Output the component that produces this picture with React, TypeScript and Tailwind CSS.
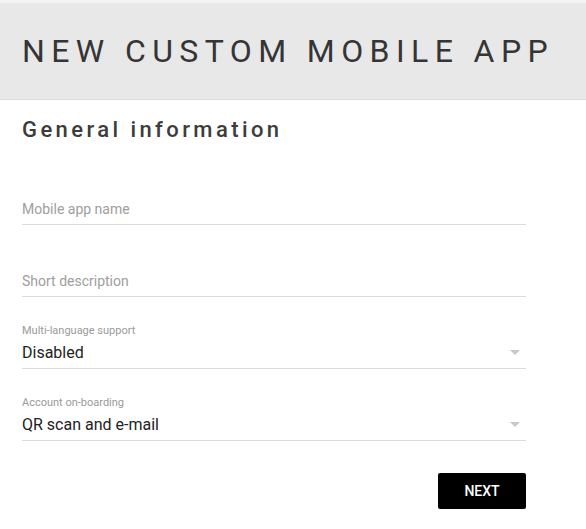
import { useState } from "react";

const Arrow = () => (
  <svg width="10" height="5" viewBox="0 0 10 5" className="shrink-0">
    <path d="M0 0h10L5 5z" fill="#c8c8c8" />
  </svg>
);

const TextField = ({ placeholder }: { placeholder: string }) => {
  const [value, setValue] = useState("");
  return (
    <div className="h-[72px] flex flex-col justify-end">
      <input
        value={value}
        onChange={(e) => setValue(e.target.value)}
        placeholder={placeholder}
        className="w-full h-[28px] pb-[4px] border-b border-[#dcdcdc] text-[14px] text-[#333] placeholder:text-[#9e9e9e] outline-none bg-transparent"
      />
    </div>
  );
};

const SelectField = ({ label, value }: { label: string; value: string }) => (
  <div className="h-[72px] flex flex-col justify-end">
    <span className="text-[11px] leading-[13px] text-[#9a9a9a]">{label}</span>
    <div className="h-[32px] flex items-center justify-between border-b border-[#dcdcdc] pr-[6px]">
      <span className="text-[16px] text-[#222]">{value}</span>
      <Arrow />
    </div>
  </div>
);

const App = () => {
  return (
    <div className="min-h-screen bg-white font-['Roboto',sans-serif]">
      <header className="h-[100px] border-t-[3px] border-t-[#f3f3f3] border-b border-b-[#dcdcdc] bg-[#e8e8e8] flex items-center px-[22px]">
        <h1 className="text-[32px] tracking-[0.2em] text-[#353535] whitespace-nowrap">
          NEW CUSTOM MOBILE APP
        </h1>
      </header>
      <main className="px-[22px] w-[548px]">
        <h2 className="mt-[13px] text-[22px] font-medium tracking-[0.155em] text-[#3c3c3c]">
          General information
        </h2>
        <div className="mt-[7px]">
          <TextField placeholder="Mobile app name" />
          <TextField placeholder="Short description" />
          <SelectField label="Multi-language support" value="Disabled" />
          <SelectField label="Account on-boarding" value="QR scan and e-mail" />
        </div>
        <div className="flex justify-end mt-[32px]">
          <button className="w-[88px] h-[36px] bg-black text-white text-[14px] font-medium rounded-[2px]">
            NEXT
          </button>
        </div>
      </main>
    </div>
  );
};

export default App;
